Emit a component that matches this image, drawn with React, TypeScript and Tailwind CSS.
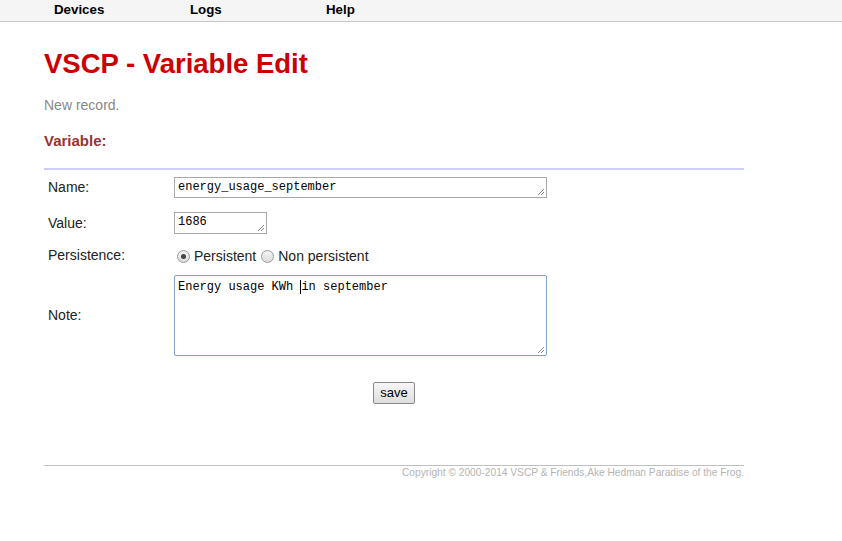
import { useState } from 'react'

const navItems = ['Devices', 'Logs', 'Help']

function Radio({ checked, label }: { checked: boolean; label: string }) {
  return (
    <label className="flex items-center gap-[4px]">
      <span className="flex h-[13px] w-[13px] items-center justify-center rounded-full border border-[#9a9a9a] bg-gradient-to-b from-[#f4f4f4] to-[#dcdcdc]">
        {checked && <span className="h-[5px] w-[5px] rounded-full bg-[#444]" />}
      </span>
      <span>{label}</span>
    </label>
  )
}

function Resize() {
  return (
    <svg width="7" height="7" viewBox="0 0 7 7" className="absolute bottom-[2px] right-[2px]">
      <path d="M1 7 L7 1 M4 7 L7 4" stroke="#888" strokeWidth="1" />
    </svg>
  )
}

export default function App() {
  const [persistent, setPersistent] = useState(true)

  return (
    <div className="min-h-[541px] bg-white font-['Liberation_Sans',Arial,sans-serif] text-[14px] text-[#222]">
      {/* Top menu */}
      <nav className="h-[22px] border-b border-[#c8c8c8] bg-[#f5f5f5]">
        <ul className="flex pl-[54px] text-[13.3px] font-bold leading-[19px] text-black">
          {navItems.map((n) => (
            <li key={n} className="w-[136px]">{n}</li>
          ))}
        </ul>
      </nav>

      <div className="w-[700px] translate-x-[44px]">
        <h1 className="mt-[25px] text-[27.5px] font-bold leading-[34px] text-[#cc0000]">VSCP - Variable Edit</h1>
        <p className="mt-[15px] text-[14px] leading-[18px] text-[#888]">New record.</p>
        <h2 className="mt-[18px] text-[15px] font-bold leading-[18px] text-[#993333]">Variable:</h2>

        <div className="mt-[18px] h-[2px] bg-[#ccccff]" />

        <form onSubmit={(e) => e.preventDefault()}>
          <div className="grid grid-cols-[130px_1fr] items-center">
            <div className="pl-[4px] pt-[7px]">Name:</div>
            <div className="pt-[7px]">
              <div className="relative h-[21px] w-[373px] border border-[#a9a9a9] bg-white pl-[3px] font-['Liberation_Mono',monospace] text-[12px] leading-[18px] text-black">
                energy_usage_september
                <Resize />
              </div>
            </div>

            <div className="pl-[4px] pt-[14px]">Value:</div>
            <div className="pt-[14px]">
              <div className="relative h-[22px] w-[93px] border border-[#a9a9a9] bg-white pl-[3px] font-['Liberation_Mono',monospace] text-[12px] leading-[19px] text-black">
                1686
                <Resize />
              </div>
            </div>

            <div className="pl-[4px] pt-[10px]">Persistence:</div>
            <div className="flex gap-[5px] pl-[3px] pt-[12px]">
              <span onClick={() => setPersistent(true)}><Radio checked={persistent} label="Persistent" /></span>
              <span onClick={() => setPersistent(false)}><Radio checked={!persistent} label="Non persistent" /></span>
            </div>

            <div className="pl-[4px] pt-[8px]">Note:</div>
            <div className="pt-[8px]">
              <div className="relative h-[81px] w-[373px] rounded-[2px] border border-[#7da2ce] bg-white pl-[3px] pt-[3px] font-['Liberation_Mono',monospace] text-[12px] leading-[16px] text-black">
                Energy usage KWh <span className="border-l border-black">in</span> september
                <Resize />
              </div>
            </div>
          </div>

          <div className="mt-[26px] flex justify-center">
            <button className="h-[22px] rounded-[2px] border border-[#8a8a8a] bg-gradient-to-b from-[#f6f6f6] to-[#dedede] px-[6px] text-[13px] leading-[18px] text-black">
              save
            </button>
          </div>
        </form>

        <div className="mt-[61px] h-px bg-[#c0c0c0]" />
        <p className="mt-[1px] text-right text-[10.2px] leading-[12px] text-[#b4b4b4]">
          Copyright © 2000-2014 VSCP &amp; Friends,Ake Hedman Paradise of the Frog.
        </p>
      </div>
    </div>
  )
}
